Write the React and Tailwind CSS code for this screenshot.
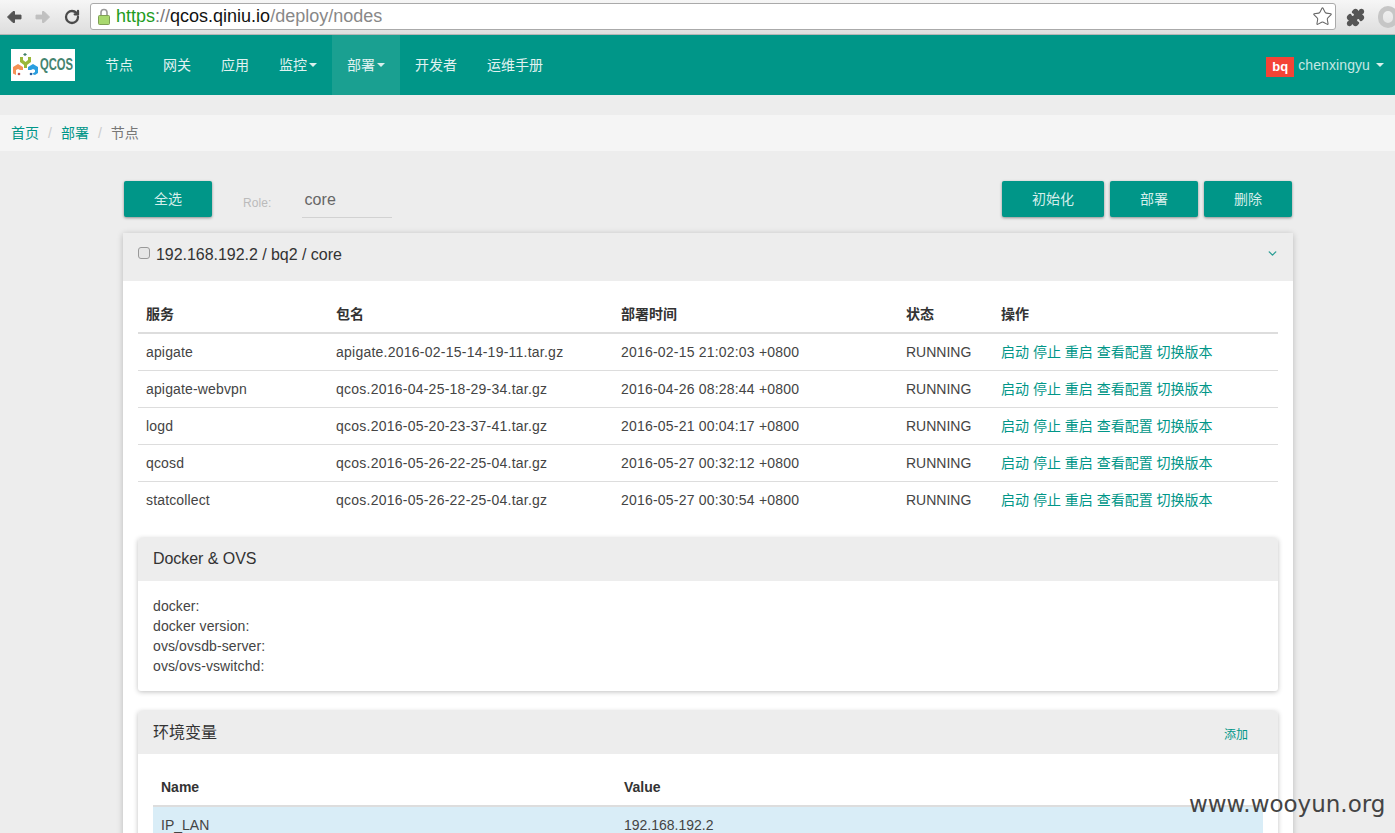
import React from 'react';
import { RotateCw, Star, Puzzle, ChevronDown } from 'lucide-react';

const FONT = { fontFamily: '"Liberation Sans", "Noto Sans CJK SC", sans-serif' };

const services = [
  ['apigate', 'apigate.2016-02-15-14-19-11.tar.gz', '2016-02-15 21:02:03 +0800'],
  ['apigate-webvpn', 'qcos.2016-04-25-18-29-34.tar.gz', '2016-04-26 08:28:44 +0800'],
  ['logd', 'qcos.2016-05-20-23-37-41.tar.gz', '2016-05-21 00:04:17 +0800'],
  ['qcosd', 'qcos.2016-05-26-22-25-04.tar.gz', '2016-05-27 00:32:12 +0800'],
  ['statcollect', 'qcos.2016-05-26-22-25-04.tar.gz', '2016-05-27 00:30:54 +0800'],
];

const Caret = () => (
  <span className="inline-block ml-[2px] align-middle w-0 h-0 border-x-[4px] border-x-transparent border-t-[4px] border-t-[#d9efec]" />
);

const NavArrow = ({ color, flip }) => (
  <svg width="16" height="14" viewBox="0 0 16 14" className={flip ? 'rotate-180' : ''}>
    <path d="M1.5 7L7 1.5h1.5v3.6H15v3.8H8.500v3.600H7z" fill={color} stroke={color} strokeWidth="1" strokeLinejoin="round" />
  </svg>
);

const LockIcon = () => (
  <svg width="12" height="17" viewBox="0 0 12 17" className="shrink-0">
    <path d="M3 8V4.500a3 3 0 0 1 6 0V8" fill="none" stroke="#9a9a9a" strokeWidth="1.600" />
    <rect x="0.500" y="7.500" width="11" height="9" rx="1" fill="#a8d86e" stroke="#7f9f55" />
  </svg>
);

const Logo = () => (
  <div className="w-[64px] h-[32px] bg-white flex items-center shrink-0">
    <svg width="27" height="27" viewBox="0 0 27 27" className="ml-[1px] shrink-0">
      <path d="M11 2.500l2-1.500 2 1.500-2 1.500z" fill="#3f7f68" />
      <path d="M8 5h3v3l2.500 2 2.500-2V5h3v5l-4 3v3h-3v-3l-4-3z" fill="#9ab83a" />
      <path d="M1 15l5-3 5 3v3H8l-2-1-2 1v5l-3-1.500z" fill="#f59255" />
      <path d="M26 15l-5-3-5 3v3h3l2-1 2 1v2l-3 2 3 1 3-2z" fill="#2b9fe0" />
      <circle cx="7" cy="22" r="1.300" fill="#c0504d" />
      <circle cx="19" cy="22" r="1.300" fill="#2a5fa0" />
    </svg>
    <span className="text-[16px] font-bold text-[#44846f] scale-x-[0.7] origin-left ml-[1px]">QCOS</span>
  </div>
);

const NavItem = ({ children, caret, active }) => (
  <a className={`h-full flex items-center px-[15px] text-[14px] text-[#e0f2f1] ${active ? 'bg-[#1aa091]' : ''}`}>
    {children}
    {caret && <Caret />}
  </a>
);

const Btn = ({ children, w }) => (
  <button className={`${w} h-[36px] rounded-[2px] bg-[#009688] text-[14px] text-[#d5eeeb] shadow-[0_1px_3px_rgba(0,0,0,0.4)]`}>
    {children}
  </button>
);

export default function App() {
  return (
    <div style={FONT} className="relative h-[833px] overflow-hidden bg-[#ededed] text-[14px] text-[#444]">
      {/* browser bar */}
      <div className="h-[35px] flex items-center overflow-hidden bg-gradient-to-b from-[#f6f6f6] to-[#dedede] border-b border-[#b5b5b5]">
        <div className="w-[90px] flex items-center pl-[6px] gap-[13px] shrink-0">
          <NavArrow color="#555" />
          <NavArrow color="#c0c0c0" flip />
          <RotateCw size={16} strokeWidth={3.4} className="text-[#4a4a4a]" />
        </div>
        <div className="w-[1246px] h-[27px] mb-[1px] shrink-0 flex items-center bg-white border border-[#aaa] rounded-[3px] pl-[7px] pr-[2px] text-[18px]">
          <LockIcon />
          <span className="ml-[6px] text-[#1e9c1e]">https</span>
          <span className="text-[#777]">://</span>
          <span className="text-[#111]">qcos.qiniu.io</span>
          <span className="text-[#888]">/deploy/nodes</span>
          <Star size={21} strokeWidth={1.2} className="ml-auto text-[#666]" />
        </div>
        <Puzzle size={19} className="ml-[10px] shrink-0 text-[#555] fill-[#555]" />
        <div className="ml-[13px] w-[20px] h-[22px] rounded-full border-[5px] border-[#c6c6c6] shrink-0" />
      </div>

      {/* navbar */}
      <div className="h-[60px] bg-[#009688] flex items-center pl-[11px] pr-[11px]">
        <Logo />
        <nav className="h-full flex ml-[15px]">
          <NavItem>节点</NavItem>
          <NavItem>网关</NavItem>
          <NavItem>应用</NavItem>
          <NavItem caret>监控</NavItem>
          <NavItem caret active>部署</NavItem>
          <NavItem>开发者</NavItem>
          <NavItem>运维手册</NavItem>
        </nav>
        <div className="ml-auto flex items-center">
          <span className="w-[28px] h-[20px] mt-[4px] bg-[#f44336] text-white text-[13px] font-bold flex items-center justify-center">bq</span>
          <span className="ml-[4px] text-[14px] tracking-[0.1px] text-[#c5e8e4]">chenxingyu</span>
          <span className="ml-[6px] w-0 h-0 border-x-[4px] border-x-transparent border-t-[4px] border-t-[#d9efec]" />
        </div>
      </div>

      {/* breadcrumb */}
      <div className="mt-[20px] h-[36px] bg-[#f5f5f5] flex items-center pl-[11px] text-[14px]">
        <a className="text-[#009688]">首页</a>
        <span className="px-[9px] text-[#ccc]">/</span>
        <a className="text-[#009688]">部署</a>
        <span className="px-[9px] text-[#ccc]">/</span>
        <span className="text-[#777]">节点</span>
      </div>

      <div className="ml-[123px] w-[1170px] pt-[30px]">
        {/* toolbar */}
        <div className="h-[36px] flex items-start pl-[1px] pr-[1px]">
          <Btn w="w-[88px]">全选</Btn>
          <span className="ml-[31px] mt-[13px] text-[12px] tracking-[0.1px] text-[#bbb]">Role:</span>
          <div className="ml-[30px] w-[90px] h-[37px] border-b border-[#d2d2d2] pl-[3px] pt-[9px] text-[16px] leading-[20px] tracking-[0.1px] text-[#666]">core</div>
          <div className="ml-auto flex gap-[6px]">
            <Btn w="w-[102px]">初始化</Btn>
            <Btn w="w-[88px]">部署</Btn>
            <Btn w="w-[88px]">删除</Btn>
          </div>
        </div>

        {/* node panel */}
        <div className="mt-[16px] bg-white rounded-[2px] shadow-[0_1px_6px_rgba(0,0,0,0.22)]">
          <div className="h-[48px] bg-[#ededed] flex items-center pl-[15px] pr-[14px] pb-[4px]">
            <span className="w-[12px] h-[12px] mb-[4px] rounded-[3px] border border-[#999] bg-[#e6e6e6]" />
            <span className="ml-[6px] text-[16px] tracking-[-0.04px] text-[#333]">192.168.192.2 / bq2 / core</span>
            <ChevronDown size={13} strokeWidth={2.5} className="ml-auto mb-[4px] text-[#2a9d94]" />
          </div>

          <div className="px-[15px] pt-[15px] pb-[20px]">
            <table className="w-full table-fixed border-collapse text-[14px]">
              <thead>
                <tr className="h-[37px] border-b-2 border-[#dddddd]">
                  <th className="w-[190px] pl-[8px] text-left font-bold text-[#333]">服务</th>
                  <th className="w-[285px] pl-[8px] text-left font-bold text-[#333]">包名</th>
                  <th className="w-[285px] pl-[8px] text-left font-bold text-[#333]">部署时间</th>
                  <th className="w-[95px] pl-[8px] text-left font-bold text-[#333]">状态</th>
                  <th className="pl-[8px] text-left font-bold text-[#333]">操作</th>
                </tr>
              </thead>
              <tbody>
                {services.map((s) => (
                  <tr key={s[0]} className="h-[37px] border-b border-[#dddddd] last:border-b-0">
                    <td className="pl-[8px] pt-[2px] tracking-[0.15px]">{s[0]}</td>
                    <td className="pl-[8px] pt-[2px] tracking-[0.24px]">{s[1]}</td>
                    <td className="pl-[8px] pt-[2px] tracking-[0.2px]">{s[2]}</td>
                    <td className="pl-[8px] pt-[2px]">RUNNING</td>
                    <td className="pl-[8px] pt-[2px] text-[#009688] whitespace-nowrap">启动 停止 重启 查看配置 切换版本</td>
                  </tr>
                ))}
              </tbody>
            </table>

            {/* docker panel */}
            <div className="mt-[20px] rounded-[3px] bg-white shadow-[0_1px_5px_rgba(0,0,0,0.25)]">
              <div className="h-[43px] bg-[#ededed] rounded-t-[3px] flex items-center pl-[15px] pb-[2px] text-[16px] tracking-[-0.05px] text-[#333]">Docker &amp; OVS</div>
              <div className="px-[15px] pt-[15px] h-[110px] leading-[20px] tracking-[0.1px]">
                <div>docker:</div>
                <div>docker version:</div>
                <div>ovs/ovsdb-server:</div>
                <div>ovs/ovs-vswitchd:</div>
              </div>
            </div>

            {/* env panel */}
            <div className="mt-[20px] rounded-[3px] bg-white shadow-[0_1px_5px_rgba(0,0,0,0.25)]">
              <div className="h-[43px] bg-[#ededed] rounded-t-[3px] flex items-center justify-between pl-[15px] pr-[30px] text-[16px] text-[#333]">
                环境变量
                <a className="mt-[4px] text-[12px] text-[#009688]">添加</a>
              </div>
              <div className="px-[15px] pt-[15px] pb-[15px]">
                <table className="w-full table-fixed border-collapse">
                  <thead>
                    <tr className="h-[37px] border-b-2 border-[#dddddd]">
                      <th className="w-[463px] pl-[8px] text-left font-bold text-[#333]">Name</th>
                      <th className="pl-[8px] text-left font-bold text-[#333]">Value</th>
                    </tr>
                  </thead>
                  <tbody>
                    <tr className="h-[37px] bg-[#d9edf7]">
                      <td className="pl-[8px]">IP_LAN</td>
                      <td className="pl-[8px]">192.168.192.2</td>
                    </tr>
                  </tbody>
                </table>
              </div>
            </div>
          </div>
        </div>
      </div>

      {/* watermark */}
      <span
        style={{ fontFamily: '"DejaVu Sans", sans-serif' }}
        className="absolute left-[1189px] top-[789px] text-[23px] leading-[30px] text-[#444]"
      >
        www.wooyun.org
      </span>
    </div>
  );
}
